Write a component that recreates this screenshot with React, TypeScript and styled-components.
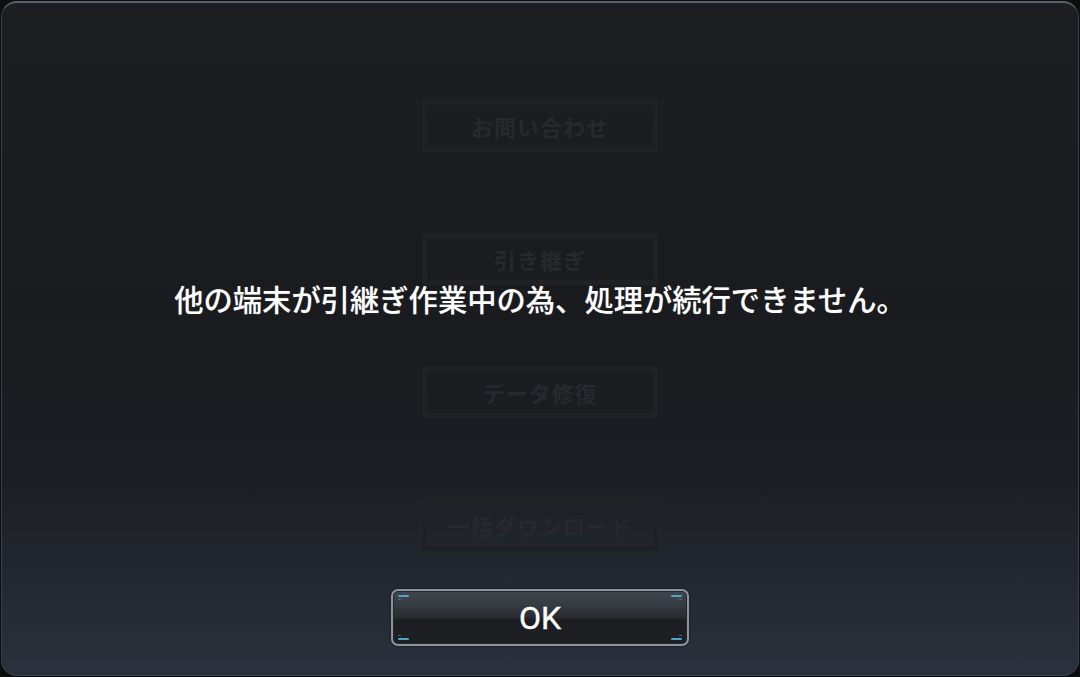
import React from "react";
import styled, { createGlobalStyle } from "styled-components";

const Global = createGlobalStyle`
  html, body { margin: 0; padding: 0; background: #0d0e10; }
  body { width: 1080px; height: 677px; overflow: hidden; }
  #root { width: 1080px; height: 677px; }
`;

const Screen = styled.div`
  position: relative;
  width: 1080px;
  height: 677px;
  padding: 1px;
  box-sizing: border-box;
  font-family: "Noto Sans CJK JP", "Noto Sans", sans-serif;
`;

const Panel = styled.div`
  position: relative;
  width: 100%;
  height: 100%;
  box-sizing: border-box;
  border-radius: 16px;
  border: 1px solid #3a3f47;
  border-top: 2px solid #5b616a;
  background: linear-gradient(
    180deg,
    #1c1e22 0%,
    #1a1b1f 45%,
    #1c1e23 70%,
    #242932 88%,
    #2b323d 100%
  );
  overflow: hidden;
`;

const GhostMenu = styled.div`
  display: flex;
  flex-direction: column;
  align-items: center;
  gap: 81px;
  padding-top: 97px;
`;

const GhostButton = styled.div`
  width: 236px;
  height: 52px;
  box-sizing: border-box;
  border: 1px solid #202226;
  box-shadow: inset 0 0 0 3px transparent, inset 0 0 0 4px #1f2125;
  display: flex;
  align-items: center;
  justify-content: center;
  color: #27292e;
  font-size: 22px;
  font-weight: 700;
  letter-spacing: 1px;
`;

const Dialog = styled.div`
  position: absolute;
  inset: 0;
  display: flex;
  flex-direction: column;
  align-items: center;
  padding-bottom: 29px;
`;

const MessageArea = styled.div`
  flex: 1;
  display: flex;
  align-items: flex-start;
  justify-content: center;
  padding-top: 275px;
  box-sizing: border-box;
`;

const Message = styled.p`
  margin: 0;
  color: #ffffff;
  font-size: 29.3px;
  font-weight: 500;
  line-height: 40px;
  text-shadow: 0 0 1px rgba(255, 255, 255, 0.35);
  white-space: nowrap;
`;

const OkButton = styled.button`
  position: relative;
  width: 298px;
  height: 57px;
  box-sizing: border-box;
  border-radius: 7px;
  border: 2px solid #8d939c;
  padding: 0;
  background: linear-gradient(
    180deg,
    #41464d 0%,
    #353940 30%,
    #2a2d32 48%,
    #1c1e21 55%,
    #1d1f23 100%
  );
  box-shadow: inset 0 0 0 1px #25282d, 0 0 2px rgba(0, 0, 0, 0.8);
  color: #ffffff;
  font-family: Roboto, "Liberation Sans", sans-serif;
  font-size: 32px;
  font-weight: 400;
  -webkit-text-stroke: 0.4px #ffffff;
  display: flex;
  align-items: center;
  justify-content: center;
  cursor: pointer;
`;

const Accent = styled.span<{ $top?: boolean; $left?: boolean }>`
  position: absolute;
  width: 11px;
  height: 2px;
  border-radius: 1px;
  background: #4fa3c8;
  ${(p) => (p.$top ? "top: 4px;" : "bottom: 4px;")}
  ${(p) => (p.$left ? "left: 5px;" : "right: 5px;")}
  &::after {
    content: "";
    position: absolute;
    width: 3px;
    height: 1px;
    background: #356f8a;
    ${(p) => (p.$top ? "top: 4px;" : "bottom: 4px;")}
    ${(p) => (p.$left ? "left: 0;" : "right: 0;")}
  }
`;

const ghostItems = ["お問い合わせ", "引き継ぎ", "データ修復", "一括ダウンロード"];

export default function App() {
  return (
    <>
      <Global />
      <Screen>
        <Panel>
          <GhostMenu>
            {ghostItems.map((t) => (
              <GhostButton key={t}>{t}</GhostButton>
            ))}
          </GhostMenu>
          <Dialog>
            <MessageArea>
              <Message>他の端末が引継ぎ作業中の為、処理が続行できません。</Message>
            </MessageArea>
            <OkButton>
              <Accent $top $left />
              <Accent $top />
              <Accent $left />
              <Accent />
              OK
            </OkButton>
          </Dialog>
        </Panel>
      </Screen>
    </>
  );
}
